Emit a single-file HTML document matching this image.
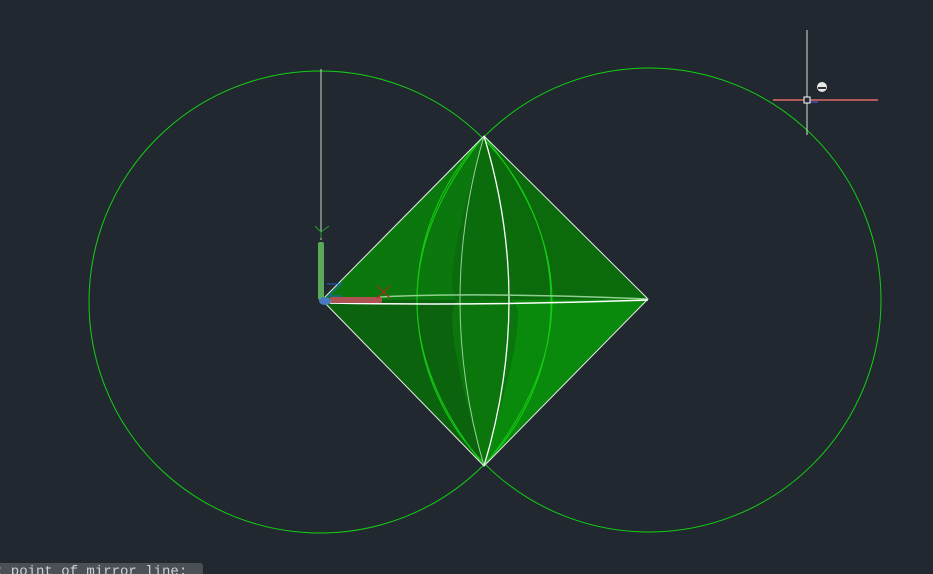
<!DOCTYPE html>
<html><head><style>
html,body{margin:0;padding:0;background:#212830;width:933px;height:574px;overflow:hidden}
.t{position:absolute;left:0;top:563px;width:203px;height:11px;background:#4b5056;overflow:hidden;border-radius:0 3px 0 0}
.t span{position:absolute;left:-6px;top:1px;color:#cfd2d4;font:14px "Liberation Mono",monospace;line-height:16px;white-space:nowrap}
</style></head><body>
<svg width="933" height="574" style="position:absolute;left:0;top:0">
<rect width="933" height="574" fill="#212830"/>
<polygon points="484,136 648,299 484,466 322,300" fill="#0a6a0c"/>
<polygon points="484,136 322,300 484,300" fill="#0a780c"/>
<polygon points="484,466 322,300 484,300" fill="#0b640d"/>
<polygon points="484,466 648,299 484,300" fill="#0a8a0c"/>
<path d="M484,136 Q436,300 460,300 L510,300 Q534,300 484,136Z" fill="#0a6c0c"/>
<path d="M484,466 Q436,300 460,300 L510,300 Q534,300 484,466Z" fill="#0a760c"/>
<circle cx="320" cy="302" r="231" fill="none" stroke="#12d012" stroke-width="1"/>
<circle cx="649" cy="300" r="232" fill="none" stroke="#12d012" stroke-width="1"/>
<path d="M484,136 Q350,300 484,466" fill="none" stroke="#18c818" stroke-width="1"/>
<path d="M484,136 Q620,300 484,466" fill="none" stroke="#18c818" stroke-width="1"/>
<polyline points="322,300 484,136 648,299 484,466 322,300" fill="none" stroke="#e8eee8" stroke-width="1"/>
<path d="M484,136 Q436,300 484,466" fill="none" stroke="#9cd09c" stroke-width="1"/>
<path d="M484,136 Q534,300 484,466" fill="none" stroke="#ffffff" stroke-width="1.3"/>
<path d="M380,297 Q480,292 648,299" fill="none" stroke="#8fcf8f" stroke-width="1.5"/>
<path d="M330,303 Q480,306 648,300" fill="none" stroke="#ffffff" stroke-width="1.5"/>
<line x1="321" y1="69" x2="321" y2="240" stroke="#c8d8c8" stroke-width="1"/>
<path d="M315,226 L321,232 L329,226 M321,232 L321,238" stroke="#2a9a2a" fill="none"/>
<rect x="318" y="242" width="6" height="58" fill="#5aa85a" rx="2"/>
<rect x="330" y="297" width="52" height="6" fill="#b05252" rx="2"/>
<path d="M377,286 L390,298 M390,286 L377,298" stroke="#c02020"/>
<path d="M327,284 L341,284 L329,296 L342,296" stroke="#2060d0" fill="none"/>
<ellipse cx="325" cy="301" rx="6" ry="4" fill="#4a78c0"/>
<line x1="807" y1="30" x2="807" y2="135" stroke="#d0e8d0" stroke-width="1"/>
<line x1="773" y1="100" x2="878" y2="100" stroke="#e06a6a" stroke-width="1.5"/>
<line x1="808" y1="102" x2="818" y2="102" stroke="#5060e0" stroke-width="1"/>
<rect x="804" y="97" width="6" height="6" fill="#212830" stroke="#ffffff" stroke-width="1"/>
<circle cx="822" cy="87" r="5" fill="#e8e8e8"/>
<rect x="818" y="87" width="8" height="2" fill="#333"/>
</svg>
<div class="t"><span>t point of mirror line:</span></div>
</body></html>
